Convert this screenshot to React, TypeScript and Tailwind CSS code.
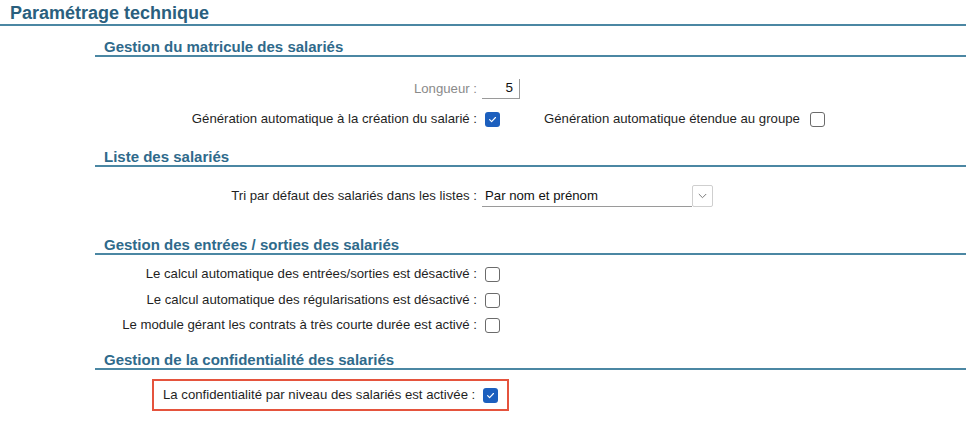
import React from "react";

const font = { fontFamily: '"Liberation Sans", Arial, sans-serif' };

function Check({ checked }: { checked?: boolean }) {
  if (checked) {
    return (
      <span className="inline-flex h-[15px] w-[15px] items-center justify-center rounded-[3px] bg-[#1c5fbe]">
        <svg width="9" height="9" viewBox="0 0 10 10" fill="none">
          <path d="M1.8 5.2 L4 7.3 L8.3 2.8" stroke="white" strokeWidth="1.3" strokeLinecap="round" strokeLinejoin="round" />
        </svg>
      </span>
    );
  }
  return <span className="inline-block h-[15px] w-[15px] rounded-[3px] border border-[#6b6b6b] bg-white" />;
}

function Heading({ children, mt }: { children: React.ReactNode; mt: string }) {
  return (
    <div className={`${mt} h-[19px] border-b-2 border-[#4b87a3] pl-[9px] text-[15px] font-bold leading-[17px] text-[#2f6a8b] whitespace-nowrap`}>
      {children}
    </div>
  );
}

function Row({ label, children, className }: { label: string; children: React.ReactNode; className: string }) {
  return (
    <div className={`flex h-[20px] items-center ${className}`}>
      <div className="w-[382px] shrink-0 text-right text-[13.2px] leading-[20px] whitespace-nowrap text-[#1f1f1f]">{label}</div>
      <div className="ml-[8px] flex items-center">{children}</div>
    </div>
  );
}

export default function App() {
  return (
    <div className="h-[425px] w-[966px] overflow-hidden bg-white" style={font}>
      <div className="h-[26px] border-b-2 border-[#4b87a3] pl-[10px] pt-[3px] text-[18px] font-bold leading-[21px] text-[#2a5f7e]">
        Paramétrage technique
      </div>
      <div className="ml-[95px]">
        <Heading mt="mt-[12px]">Gestion du matricule des salariés</Heading>
        <div className="mt-[22px] flex h-[20px] items-center">
          <div className="w-[382px] shrink-0 text-right text-[13.2px] leading-[20px] text-[#8a8a8a]">Longueur :</div>
          <div className="ml-[5px] flex h-[20px] w-[38px] items-center justify-end border-b border-r border-[#9a9a9a] pr-[6px] text-[13.5px] text-[#111]">5</div>
        </div>
        <div className="mt-[10px] flex h-[20px] items-center">
          <div className="w-[382px] shrink-0 text-right text-[13.2px] leading-[20px] whitespace-nowrap text-[#1f1f1f]">Génération automatique à la création du salarié :</div>
          <div className="ml-[8px] flex items-center"><Check checked /></div>
          <div className="ml-[44px] text-[13.2px] leading-[20px] whitespace-nowrap text-[#1f1f1f]">Génération automatique étendue au groupe</div>
          <div className="ml-[10px] flex items-center"><Check /></div>
        </div>
        <Heading mt="mt-[19px]">Liste des salariés</Heading>
        <div className="mt-[18px] flex h-[22px] items-end">
          <div className="w-[382px] shrink-0 self-center text-right text-[13.2px] leading-[20px] whitespace-nowrap text-[#1f1f1f]">Tri par défaut des salariés dans les listes :</div>
          <div className="ml-[5px] flex h-[22px] w-[210px] items-center border-b border-[#9a9a9a] pl-[3px] text-[13.2px] text-[#111]">Par nom et prénom</div>
          <div className="flex h-[22px] w-[21px] items-center justify-center rounded-[2px] border border-[#cfcfcf] bg-white">
            <svg width="9" height="6" viewBox="0 0 9 6" fill="none">
              <path d="M0.8 1 L4.5 4.7 L8.2 1" stroke="#7a7a7a" strokeWidth="1" />
            </svg>
          </div>
        </div>
        <Heading mt="mt-[29px]">Gestion des entrées / sorties des salariés</Heading>
        <Row className="mt-[9px]" label="Le calcul automatique des entrées/sorties est désactivé :"><Check /></Row>
        <Row className="mt-[6px]" label="Le calcul automatique des régularisations est désactivé :"><Check /></Row>
        <Row className="mt-[5px]" label="Le module gérant les contrats à très courte durée est activé :"><Check /></Row>
        <Heading mt="mt-[16px]">Gestion de la confidentialité des salariés</Heading>
        <div className="ml-[57px] mt-[9px] flex h-[32px] w-[357px] items-center border-2 border-[#e5533d] pl-[9px]">
          <div className="text-[13.2px] leading-[20px] text-[#1f1f1f] whitespace-nowrap">La confidentialité par niveau des salariés est activée :</div>
          <div className="ml-[8px] flex items-center"><Check checked /></div>
        </div>
      </div>
    </div>
  );
}
